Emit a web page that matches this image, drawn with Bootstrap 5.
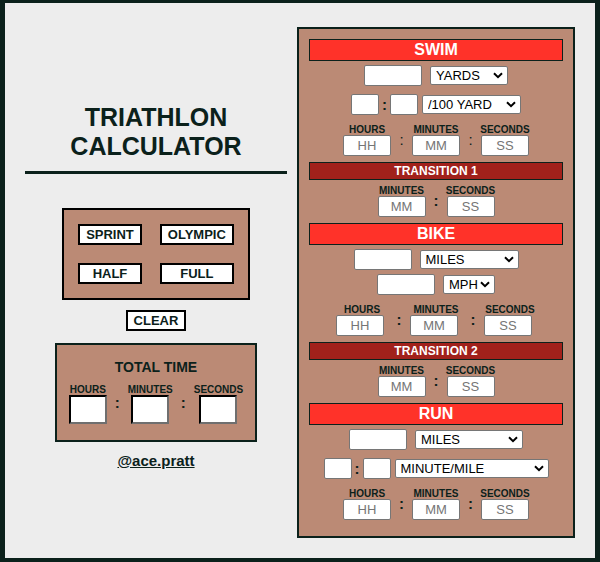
<!DOCTYPE html>
<html lang="en">
<head>
<meta charset="utf-8">
<meta name="viewport" content="width=device-width, initial-scale=1">
<title>Triathlon Calculator</title>
<link href="https://cdn.jsdelivr.net/npm/bootstrap@5.3.0/dist/css/bootstrap.min.css" rel="stylesheet">
<style>
  :root { --ink: #0b211b; --clay: #bb8a75; --paper: #ededed; }
  body { background: var(--ink); color: var(--ink); padding: 3px 5px 4px; font-family: "Liberation Sans", Arial, sans-serif; }
  .page { background: var(--paper); display: grid; grid-template-columns: 262fr 278fr; gap: 10px; padding: 24px 20px 20px; }
  .intro { padding-top: 76px; }
  .title { font-size: 25px; line-height: 29px; font-weight: 700; padding-bottom: 10px; border-bottom: 3px solid var(--ink); margin-bottom: 34px; }
  .presets { display: grid; grid-template-columns: auto auto; gap: 18px; padding: 14px; border: 2px solid #000; background: var(--clay); margin-bottom: 10px; }
  .tri-btn { background: #fff; border: 2px solid #000; color: var(--ink); font-size: 13px; line-height: 17px; font-weight: 700; padding: 0 6px; border-radius: 0; }
  .total { border: 2px solid var(--ink); background: var(--clay); padding: 12px 12px 16px; margin: 12px 0 9px; }
  .total-title { font-size: 14px; line-height: 20px; font-weight: 700; margin-bottom: 7px; }
  .total-input { width: 38px; height: 29px; padding: 0; border: 2px inset #767676; border-color: #1f1f1f #6f6f6f #6f6f6f #1f1f1f; background: #fff; font-size: 13px; text-align: center; }
  .handle { color: var(--ink); font-size: 15px; line-height: 20px; font-weight: 700; }
  .planner { border: 2px solid var(--ink); background: var(--clay); padding: 10px 10px 16px; }
  .leg { border: 1px solid var(--ink); background: #ff3229; color: #fff; font-size: 16px; line-height: 20px; font-weight: 700; margin: 0 0 4px; }
  .swap { border: 1px solid var(--ink); background: #a1211b; color: #fff; font-size: 12px; line-height: 16px; font-weight: 700; margin: 0 0 5px; }
  .entry { height: 21px; width: 48px; padding: 0 1px; border: 1px solid #767676; border-radius: 2px; background: #fff; font-size: 13px; line-height: 19px; text-align: center; }
  .entry::placeholder { color: #757575; opacity: 1; }
  .entry-long { width: 58px; }
  .entry-short { width: 28px; }
  .unit { height: 19px; padding: 0 16px 0 5px; border: 1px solid #767676; border-radius: 2px; color: #000; font-size: 13px; line-height: 17px; appearance: none;
    background: #fff url("data:image/svg+xml,%3Csvg xmlns='http://www.w3.org/2000/svg' width='10' height='7' viewBox='0 0 10 7'%3E%3Cpath d='M1 1.2 5 5.2 9 1.2' fill='none' stroke='%23000' stroke-width='2'/%3E%3C/svg%3E") no-repeat right 4px center; }
  .w-78 { width: 78px; } .w-99 { width: 99px; } .w-52 { width: 52px; } .w-108 { width: 108px; } .w-154 { width: 154px; }
  .field-row { display: flex; justify-content: center; align-items: center; column-gap: 8px; }
  .pace-row { column-gap: 4px; margin-top: 8px; }
  .speed-row { margin-top: 4px; }
  .times { display: flex; justify-content: center; margin-bottom: 6px; }
  .leg-times { margin-top: 9px; }
  .time-label { display: flex; justify-content: center; font-size: 10px; line-height: 11px; font-weight: 700; }
  .time-cell { width: 48px; }
  .wide-cells .time-cell { width: 52px; }
  .colon { width: 21px; margin-top: 11px; font-size: 15px; line-height: 10px; font-weight: 700; text-align: center; }
  .wide-cells .colon { width: 22px; }
  .thin-colons .colon { font-weight: 400; }
  .total .colon { line-height: 16px; }
  .pace-colon { width: 11px; font-size: 15px; line-height: 10px; font-weight: 700; text-align: center; }
</style>
</head>
<body>
<main class="page">
  <section class="intro d-flex flex-column align-items-center text-center">
    <h1 class="title align-self-stretch">TRIATHLON<br>CALCULATOR</h1>
    <div class="presets">
      <button type="button" class="tri-btn">SPRINT</button>
      <button type="button" class="tri-btn">OLYMPIC</button>
      <button type="button" class="tri-btn">HALF</button>
      <button type="button" class="tri-btn">FULL</button>
    </div>
    <button type="button" class="tri-btn">CLEAR</button>
    <div class="total">
      <h2 class="total-title">TOTAL TIME</h2>
      <div class="d-flex">
        <div class="d-flex flex-column align-items-center"><label class="time-label" for="total-h">HOURS</label><input class="total-input" id="total-h" type="text"></div>
        <div class="colon">:</div>
        <div class="d-flex flex-column align-items-center"><label class="time-label" for="total-m">MINUTES</label><input class="total-input" id="total-m" type="text"></div>
        <div class="colon">:</div>
        <div class="d-flex flex-column align-items-center"><label class="time-label" for="total-s">SECONDS</label><input class="total-input" id="total-s" type="text"></div>
      </div>
    </div>
    <a class="handle" href="#">@ace.pratt</a>
  </section>

  <form class="planner">
    <h2 class="leg text-center">SWIM</h2>
    <div class="field-row">
      <input class="entry entry-long" type="text" aria-label="Swim distance">
      <select class="unit w-78" aria-label="Swim distance unit"><option>YARDS</option><option>METERS</option></select>
    </div>
    <div class="field-row pace-row">
      <div class="d-flex align-items-center">
        <input class="entry entry-short" type="text" aria-label="Swim pace minutes">
        <span class="pace-colon">:</span>
        <input class="entry entry-short" type="text" aria-label="Swim pace seconds">
      </div>
      <select class="unit w-99" aria-label="Swim pace unit"><option>/100 YARD</option><option>/100 METER</option></select>
    </div>
    <div class="times leg-times thin-colons">
      <div class="time-cell"><label class="time-label" for="swim-h">HOURS</label><input class="entry d-block" id="swim-h" type="text" placeholder="HH"></div>
      <div class="colon">:</div>
      <div class="time-cell"><label class="time-label" for="swim-m">MINUTES</label><input class="entry d-block" id="swim-m" type="text" placeholder="MM"></div>
      <div class="colon">:</div>
      <div class="time-cell"><label class="time-label" for="swim-s">SECONDS</label><input class="entry d-block" id="swim-s" type="text" placeholder="SS"></div>
    </div>

    <h3 class="swap text-center">TRANSITION 1</h3>
    <div class="times">
      <div class="time-cell"><label class="time-label" for="t1-m">MINUTES</label><input class="entry d-block" id="t1-m" type="text" placeholder="MM"></div>
      <div class="colon">:</div>
      <div class="time-cell"><label class="time-label" for="t1-s">SECONDS</label><input class="entry d-block" id="t1-s" type="text" placeholder="SS"></div>
    </div>

    <h2 class="leg text-center">BIKE</h2>
    <div class="field-row">
      <input class="entry entry-long" type="text" aria-label="Bike distance">
      <select class="unit w-99" aria-label="Bike distance unit"><option>MILES</option><option>KILOMETERS</option></select>
    </div>
    <div class="field-row speed-row">
      <input class="entry entry-long" type="text" aria-label="Bike speed">
      <select class="unit w-52" aria-label="Bike speed unit"><option>MPH</option><option>KPH</option></select>
    </div>
    <div class="times leg-times wide-cells">
      <div class="time-cell"><label class="time-label" for="bike-h">HOURS</label><input class="entry d-block" id="bike-h" type="text" placeholder="HH"></div>
      <div class="colon">:</div>
      <div class="time-cell"><label class="time-label" for="bike-m">MINUTES</label><input class="entry d-block" id="bike-m" type="text" placeholder="MM"></div>
      <div class="colon">:</div>
      <div class="time-cell"><label class="time-label" for="bike-s">SECONDS</label><input class="entry d-block" id="bike-s" type="text" placeholder="SS"></div>
    </div>

    <h3 class="swap text-center">TRANSITION 2</h3>
    <div class="times">
      <div class="time-cell"><label class="time-label" for="t2-m">MINUTES</label><input class="entry d-block" id="t2-m" type="text" placeholder="MM"></div>
      <div class="colon">:</div>
      <div class="time-cell"><label class="time-label" for="t2-s">SECONDS</label><input class="entry d-block" id="t2-s" type="text" placeholder="SS"></div>
    </div>

    <h2 class="leg text-center">RUN</h2>
    <div class="field-row">
      <input class="entry entry-long" type="text" aria-label="Run distance">
      <select class="unit w-108" aria-label="Run distance unit"><option>MILES</option><option>KILOMETERS</option></select>
    </div>
    <div class="field-row pace-row">
      <div class="d-flex align-items-center">
        <input class="entry entry-short" type="text" aria-label="Run pace minutes">
        <span class="pace-colon">:</span>
        <input class="entry entry-short" type="text" aria-label="Run pace seconds">
      </div>
      <select class="unit w-154" aria-label="Run pace unit"><option>MINUTE/MILE</option><option>MINUTE/KILOMETER</option></select>
    </div>
    <div class="times leg-times mb-0">
      <div class="time-cell"><label class="time-label" for="run-h">HOURS</label><input class="entry d-block" id="run-h" type="text" placeholder="HH"></div>
      <div class="colon">:</div>
      <div class="time-cell"><label class="time-label" for="run-m">MINUTES</label><input class="entry d-block" id="run-m" type="text" placeholder="MM"></div>
      <div class="colon">:</div>
      <div class="time-cell"><label class="time-label" for="run-s">SECONDS</label><input class="entry d-block" id="run-s" type="text" placeholder="SS"></div>
    </div>
  </form>
</main>
<script src="https://cdn.jsdelivr.net/npm/bootstrap@5.3.0/dist/js/bootstrap.bundle.min.js"></script>
</body>
</html>
